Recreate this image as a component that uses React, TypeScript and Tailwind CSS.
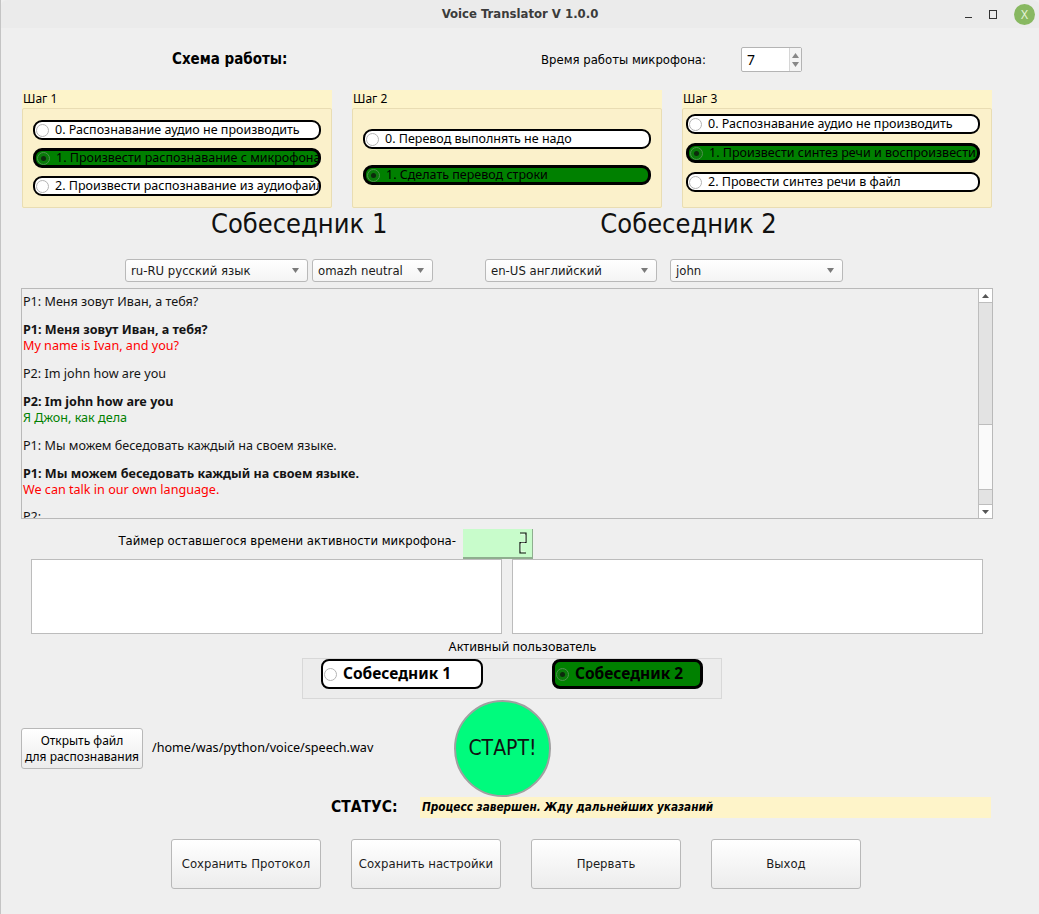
import React from "react"

const narrow = "font-['Liberation_Sans_Narrow','DejaVu_Sans_Condensed',sans-serif]"
const regular = "font-['Noto_Sans','DejaVu_Sans',sans-serif]"

function Dot({ checked }: { checked: boolean }) {
  return (
    <span
      className={
        "flex h-[13px] w-[13px] shrink-0 items-center justify-center rounded-full border " +
        (checked ? "border-[#4f8f4f] bg-[#0a7a0a]" : "border-[#b4b4b4] bg-white")
      }
    >
      {checked ? <span className="h-[5px] w-[5px] rounded-full bg-[#0d2a0d]" /> : null}
    </span>
  )
}

function Pill({
  label,
  checked = false,
  big = false,
}: {
  label: string
  checked?: boolean
  big?: boolean
}) {
  return (
    <div
      className={
        "flex items-center overflow-hidden whitespace-nowrap border-black " +
        (big ? "h-[30px] rounded-[8px] gap-[6px] pl-[1px] " : "h-[20px] rounded-[9px] gap-[6px] pl-[1px] ") +
        (checked ? "border-[3px] bg-[#008000]" : "border-2 bg-white")
      }
    >
      <Dot checked={checked} />
      <span
        className={
          big
            ? "text-[15.5px] font-bold text-black " + regular
            : "text-[12.5px] text-black " + regular
        }
      >
        {label}
      </span>
    </div>
  )
}

function Step({
  title,
  children,
  pad,
}: {
  title: string
  children: React.ReactNode
  pad: string
}) {
  return (
    <div className="flex h-[118px] w-[310px] flex-col bg-[#fdf4ca]">
      <div className={"h-[18px] px-[1px] pt-[1px] text-[12px] leading-[16px] text-black " + regular}>
        {title}
      </div>
      <div className={"flex flex-1 flex-col rounded-[2px] border border-[#e9ddb3] bg-[#fbf1cb] " + pad}>
        {children}
      </div>
    </div>
  )
}

function Combo({ text, w }: { text: string; w: string }) {
  return (
    <div
      className={
        "flex h-[23px] items-center justify-between rounded-[3px] border border-[#b9b9b9] bg-gradient-to-b from-white to-[#f4f4f4] pl-[5px] pr-[8px] " +
        w
      }
    >
      <span className={"text-[13px] text-[#1a1a1a] " + narrow}>{text}</span>
      <svg width="7" height="5" viewBox="0 0 7 5">
        <path d="M0 0 L7 0 L3.5 5 Z" fill="#7a7a7a" />
      </svg>
    </div>
  )
}

function Btn({ label }: { label: string }) {
  return (
    <div
      className={
        "flex h-[50px] w-[150px] items-center justify-center rounded-[3px] border border-[#b8b8b8] bg-gradient-to-b from-white to-[#ececec] text-[13px] text-[#1c1c1c] " +
        narrow
      }
    >
      {label}
    </div>
  )
}

export default function App() {
  return (
    <div className="flex h-[914px] w-[1039px] flex-col overflow-hidden border-l border-[#c4c4c4] bg-[#efefef] text-black">
      {/* title bar */}
      <div className="relative flex h-[28px] shrink-0 items-center justify-center rounded-t-[6px] bg-[#ebebeb]">
        <span className={"text-[13px] font-bold text-[#3b3b3b] " + narrow}>Voice Translator V 1.0.0</span>
        <div className="absolute right-[4px] top-[4px] flex items-center gap-[17px]">
          <span className="mt-[6px] h-[1px] w-[7px] bg-[#333]" />
          <span className="h-[9px] w-[8px] border border-[#333]" />
          <span className="flex h-[21px] w-[21px] items-center justify-center rounded-full bg-[#88b861] text-[12px] text-[#e4f2d8]">
            X
          </span>
        </div>
      </div>

      {/* header row */}
      <div className="mt-[19px] flex h-[25px] items-center">
        <span className={"ml-[171px] w-[369px] text-[15px] font-bold " + narrow}>Схема работы:</span>
        <span className={"w-[200px] text-[13px] " + narrow}>Время работы микрофона:</span>
        <div className="flex h-[25px] w-[61px] items-center justify-between rounded-[2px] border border-[#b4b4b4] bg-white pl-[5px]">
          <span className={"text-[14px] " + regular}>7</span>
          <div className="flex h-full w-[12px] flex-col items-center justify-center gap-[4px] border-l border-[#d6d6d6] bg-[#f4f4f4]">
            <svg width="7" height="5" viewBox="0 0 7 5">
              <path d="M0 5 L7 5 L3.5 0 Z" fill="#888" />
            </svg>
            <svg width="7" height="5" viewBox="0 0 7 5">
              <path d="M0 0 L7 0 L3.5 5 Z" fill="#888" />
            </svg>
          </div>
        </div>
      </div>

      {/* steps */}
      <div className="ml-[21px] mt-[18px] flex gap-[20px]">
        <Step title="Шаг 1" pad="pt-[11px] gap-[8px] pl-[10px] pr-[10px]">
          <Pill label="0. Распознавание аудио не производить" />
          <Pill label="1. Произвести распознавание с микрофона" checked />
          <Pill label="2. Произвести распознавание из аудиофайла" />
        </Step>
        <Step title="Шаг 2" pad="pt-[20px] gap-[16px] pl-[10px] pr-[10px]">
          <Pill label="0. Перевод выполнять не надо" />
          <Pill label="1. Сделать перевод строки" checked />
        </Step>
        <Step title="Шаг 3" pad="pt-[5px] gap-[9px] pl-[3px] pr-[11px]">
          <Pill label="0. Распознавание аудио не производить" />
          <Pill label="1. Произвести синтез речи и воспроизвести" checked />
          <Pill label="2. Провести синтез речи в файл" />
        </Step>
      </div>

      {/* interlocutors */}
      <div className={"mt-[1px] flex h-[30px] items-center text-[27px] leading-[30px] text-[#111] " + narrow}>
        <span className="ml-[210px]">Собеседник 1</span>
        <span className="ml-[213px]">Собеседник 2</span>
      </div>

      <div className="mt-[20px] flex items-center">
        <div className="ml-[124px]">
          <Combo text="ru-RU русский язык" w="w-[183px]" />
        </div>
        <div className="ml-[4px]">
          <Combo text="omazh neutral" w="w-[121px]" />
        </div>
        <div className="ml-[52px]">
          <Combo text="en-US английский" w="w-[172px]" />
        </div>
        <div className="ml-[13px]">
          <Combo text="john" w="w-[173px]" />
        </div>
      </div>

      {/* protocol */}
      <div className="ml-[20px] mt-[6px] flex h-[231px] w-[972px] border border-[#b9b9b9] bg-[#efefef]">
        <div className={"flex-1 overflow-hidden pl-[1px] pt-[5px] text-[12.6px] leading-[16px] text-[#141414] " + regular}>
          <p>P1: Меня зовут Иван, а тебя?</p>
          <p className="mt-[12px] font-bold">P1: Меня зовут Иван, а тебя?</p>
          <p className="text-[#ff0000]">My name is Ivan, and you?</p>
          <p className="mt-[12px]">P2: Im john how are you</p>
          <p className="mt-[12px] font-bold">P2: Im john how are you</p>
          <p className="text-[#008000]">Я Джон, как дела</p>
          <p className="mt-[12px]">P1: Мы можем беседовать каждый на своем языке.</p>
          <p className="mt-[12px] font-bold">P1: Мы можем беседовать каждый на своем языке.</p>
          <p className="text-[#ff0000]">We can talk in our own language.</p>
          <p className="mt-[11px]">P2:</p>
        </div>
        <div className="flex w-[14px] flex-col border-l border-[#bdbdbd]">
          <div className="flex h-[14px] items-center justify-center border-b border-[#bdbdbd] bg-white">
            <svg width="7" height="4" viewBox="0 0 7 4">
              <path d="M0 4 L7 4 L3.5 0 Z" fill="#555" />
            </svg>
          </div>
          <div className="h-[121px] bg-[#e3e3e3]" />
          <div className="h-[66px] border-y border-[#bdbdbd] bg-[#fafafa]" />
          <div className="flex-1 bg-[#e3e3e3]" />
          <div className="flex h-[14px] items-center justify-center border-t border-[#bdbdbd] bg-white">
            <svg width="7" height="4" viewBox="0 0 7 4">
              <path d="M0 0 L7 0 L3.5 4 Z" fill="#555" />
            </svg>
          </div>
        </div>
      </div>

      {/* timer */}
      <div className="mt-[10px] flex h-[30px] items-start">
        <span className={"mt-[2px] w-[455px] text-right text-[13px] " + narrow}>
          Таймер оставшегося времени активности микрофона-
        </span>
        <div className="ml-[7px] flex h-[30px] w-[70px] items-center justify-end border-b-2 border-r border-[#8fae8f] bg-[#c8fccb] pr-[5px]">
          <svg width="8" height="22" viewBox="0 0 8 22">
            <path d="M1 1 H7 V10.5 H1 V21 H7" fill="none" stroke="#111" strokeWidth="1.2" />
            <path d="M2 2.5 H6 M6 3 V10 M2 11 H6 M2 12 V19.5 M2 19.5 H6" fill="none" stroke="#f2fff2" strokeWidth="0.6" />
          </svg>
        </div>
      </div>

      <div className="ml-[30px] flex gap-[10px]">
        <div className="h-[75px] w-[471px] border border-[#bcbcbc] bg-white" />
        <div className="h-[75px] w-[471px] border border-[#bcbcbc] bg-white" />
      </div>

      {/* active user */}
      <div className={"mt-[4px] flex h-[17px] justify-center pl-[5px] text-[12.6px] " + regular}>
        Активный пользователь
      </div>
      <div className="ml-[301px] mt-[3px] flex h-[41px] w-[420px] items-start border border-[#d8d8d8] bg-[#ececec]">
        <div className="ml-[18px] w-[162px]">
          <Pill label="Собеседник 1" big />
        </div>
        <div className="ml-[69px] w-[151px]">
          <Pill label="Собеседник 2" checked big />
        </div>
      </div>

      {/* open file / start */}
      <div className="mt-[1px] flex h-[97px] items-center">
        <div
          className={
            "ml-[20px] flex h-[41px] w-[122px] flex-col items-center justify-center whitespace-nowrap rounded-[3px] border border-[#b8b8b8] bg-gradient-to-b from-white to-[#ececec] text-[12px] leading-[16px] " +
            regular
          }
        >
          <span>Открыть файл</span>
          <span>для распознавания</span>
        </div>
        <span className={"ml-[9px] w-[302px] text-[12.6px] " + regular}>/home/was/python/voice/speech.wav</span>
        <div
          className={
            "flex h-[97px] w-[97px] items-center justify-center rounded-full border-2 border-[#a0a0a0] bg-[#00fb7d] text-[21px] text-[#111] " +
            narrow
          }
        >
          СТАРТ!
        </div>
      </div>

      {/* status */}
      <div className="flex h-[21px] items-center">
        <span className={"ml-[330px] w-[89px] text-[15.5px] font-bold " + narrow}>СТАТУС:</span>
        <div className="flex h-[21px] w-[571px] items-center bg-[#fef4c9] pl-[2px]">
          <span className={"text-[11.7px] font-bold italic " + narrow}>
            Процесс завершен. Жду дальнейших указаний
          </span>
        </div>
      </div>

      {/* buttons */}
      <div className="ml-[170px] mt-[21px] flex gap-[30px]">
        <Btn label="Сохранить Протокол" />
        <Btn label="Сохранить настройки" />
        <Btn label="Прервать" />
        <Btn label="Выход" />
      </div>
    </div>
  )
}
